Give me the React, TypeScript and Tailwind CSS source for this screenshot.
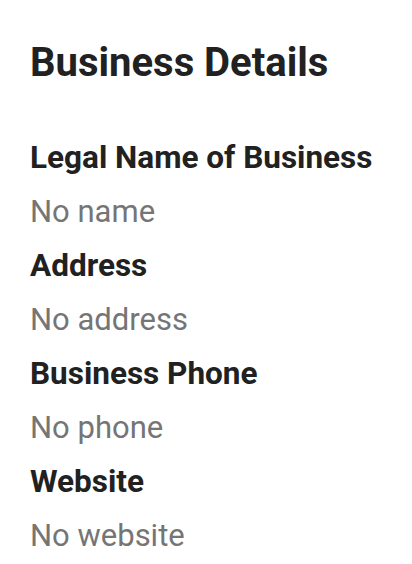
export default function App() {
  const rows = [
    ["Legal Name of Business", "No name"],
    ["Address", "No address"],
    ["Business Phone", "No phone"],
    ["Website", "No website"],
  ];
  return (
    <div className="w-[412px] h-[564px] bg-white pl-[30px] pt-[39px] font-['Roboto',sans-serif] overflow-hidden">
      <h1 className="text-[40px] leading-[48px] font-bold text-[#212121]">Business Details</h1>
      <div className="mt-[44px] flex flex-col">
        {rows.map(([label, value]) => (
          <div key={label} className="flex flex-col">
            <div className="text-[31.5px] leading-[54px] font-bold text-[#212121] whitespace-nowrap">{label}</div>
            <div className="text-[31px] leading-[54px] text-[#757575] whitespace-nowrap">{value}</div>
          </div>
        ))}
      </div>
    </div>
  );
}
